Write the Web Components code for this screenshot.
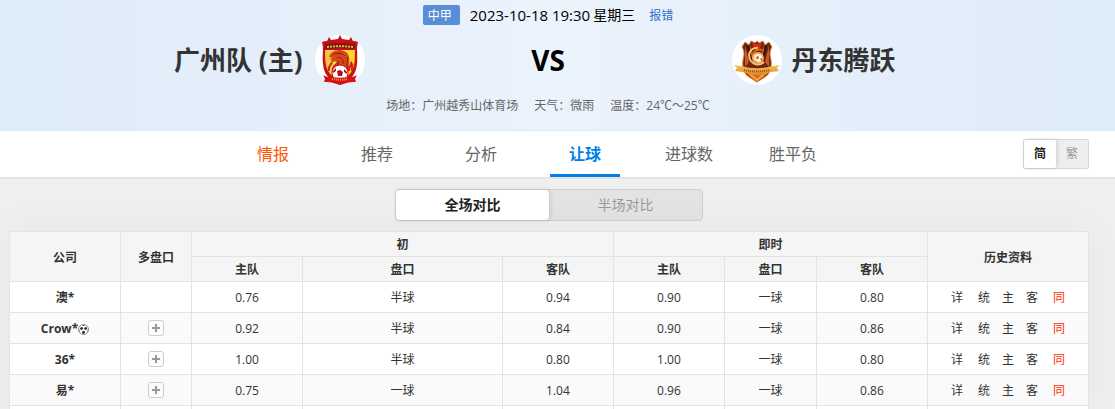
<!DOCTYPE html>
<html lang="zh-CN">
<head>
<meta charset="utf-8">
<title>让球</title>
<style>
  body {
    margin: 0;
    background: #efefef;
    color: #333;
    font: 12px/20px "Open Sans", "Noto Sans CJK SC", sans-serif;
    --gutter-left: 9px;
    --gutter-right: 26px;
  }
  main {
    padding: 10px var(--gutter-right) 0 var(--gutter-left);
  }
</style>
</head>
<body>

<match-header>
  <span slot="league">中甲</span>
  <time slot="time" datetime="2023-10-18T19:30">2023-10-18 19:30</time>
  <span slot="weekday">星期三</span>
  <team-name slot="home">广州队 (主)<home-crest slot="crest"></home-crest></team-name>
  <team-name slot="away" flip>丹东腾跃<away-crest slot="crest"></away-crest></team-name>
  <span slot="info">场地：广州越秀山体育场</span>
  <span slot="info">天气：微雨</span>
  <span slot="info">温度：24℃～25℃</span>
</match-header>

<match-nav></match-nav>

<main>
  <toggle-group class="period" options="全场对比,半场对比"></toggle-group>
  <odds-table></odds-table>
</main>

<script>
class MatchHeader extends HTMLElement {
  constructor() {
    super();
    this.attachShadow({ mode: 'open' });
  }

  connectedCallback() {
    this.shadowRoot.innerHTML = `
      <style>
        :host {
          display: block;
          padding: 0 28px 14px var(--gutter-left);
          border-bottom: 1px solid #d8eafc;
          background: linear-gradient(90deg, #deebf9, #ebf3fc 50%, #deebf9);
        }
        .top, .info {
          display: flex;
          justify-content: center;
          align-items: center;
        }
        .top {
          height: 30px;
          color: #000;
          font-size: 14px;
        }
        .league {
          padding: 2px 8px 0 5px;
          margin-right: 10px;
          border-radius: 2px;
          background: #588ed6;
          color: #fff;
          font-size: 12px;
          line-height: 18px;
        }
        ::slotted(time) {
          margin-right: 3px;
          font-size: 15px;
        }
        a {
          padding-top: 2px;
          margin-left: 14px;
          color: #2f6fcb;
          font-size: 12px;
          text-decoration: none;
        }
        .teams {
          display: grid;
          grid-template-columns: 1fr 367px 1fr;
          align-items: center;
          margin: 5px 0 11px;
        }
        .vs {
          color: #000;
          font-size: 28px;
          font-weight: bold;
          text-align: center;
        }
        .info {
          gap: 16px;
          color: #666;
        }
      </style>
      <div class="top">
        <span class="league"><slot name="league"></slot></span>
        <slot name="time"></slot>
        <slot name="weekday"></slot>
        <a href="#report">报错</a>
      </div>
      <div class="teams">
        <slot name="home"></slot>
        <span class="vs">VS</span>
        <slot name="away"></slot>
      </div>
      <div class="info"><slot name="info"></slot></div>
    `;
  }
}

class TeamName extends HTMLElement {
  constructor() {
    super();
    this.attachShadow({ mode: 'open' });
  }

  connectedCallback() {
    this.shadowRoot.innerHTML = `
      <style>
        :host {
          display: flex;
          justify-content: flex-end;
          align-items: center;
          gap: 12px;
          font-size: 26px;
          font-weight: bold;
        }
        :host([flip]) {
          flex-direction: row-reverse;
          gap: 10px;
        }
      </style>
      <span><slot></slot></span>
      <slot name="crest"></slot>
    `;
  }
}

const CREST_STYLE = `
  <style>
    :host { display: block; width: 50px; height: 50px; }
    svg { display: block; }
  </style>
`;

class HomeCrest extends HTMLElement {
  constructor() {
    super();
    this.attachShadow({ mode: 'open' });
  }

  connectedCallback() {
    this.shadowRoot.innerHTML = `${CREST_STYLE}
      <svg width="50" height="50" viewBox="0 0 50 50" aria-hidden="true">
        <defs>
          <linearGradient id="gold">
            <stop offset="0" stop-color="#f3bd45"/>
            <stop offset=".5" stop-color="#ffe94a"/>
            <stop offset="1" stop-color="#f8cf1c"/>
          </linearGradient>
        </defs>
        <circle cx="25" cy="25" r="25" fill="#fff"/>
        <path d="M7 7c2-1 3-1 5-1l2-4 2 3 7-1 2-4 2 4 7 1 2-3 2 4c2 0 3 0 5 1-2 7 0 14-1 22-1 10-5 15-17 21C13 44 9 39 8 29 7 21 9 14 7 7z" fill="#c9101a"/>
        <path d="M10 15h30c0 18-1 23-15 31C11 38 10 33 10 15z" fill="url(#gold)"/>
        <path d="M10 9c10-1 20-1 30 0v5c-10-1-20-1-30 0z" fill="#7d1410"/>
        <path d="M12 12c9-1 17-1 26 0" fill="none" stroke="#e5b43c" stroke-width="2" stroke-dasharray="2 1"/>
        <path d="M14 22c1-4 5-7 10-7s9 2 10 7c1 4-1 7 1 11l-4 5H17c-1-5 1-8 5-10l-2-2-5 3 2-4-3-1 4-1z" fill="#d4481b"/>
        <path d="M18 20c4-3 9-2 12 1M22 23c4-2 7 1 6 6M18 34c0-4 3-5 6-7M32 22c2 5-2 8 1 13M22 18l4 1M24 26l-3 7" fill="none" stroke="#971b12" stroke-width="1"/>
        <path d="M34 36c-1-4 3-5 2-9 3 4 0 6 1 9M14 36c-1-4 1-6 3-8" fill="none" stroke="#d71d19" stroke-width="2"/>
        <circle cx="25" cy="38" r="8" fill="#fff" stroke="#c9101a"/>
        <path d="M22 36l3-1 3 2-1 4h-4zM18 36l3-3v3l-3 2zM29 34l3 3v2l-3-2z" fill="#b01019"/>
        <path d="M8 40c3 2 6 2 9 2 5 1 11 1 16 0 3 0 6 0 9-2l-2 4 1 3c-4 0-7 0-9 1l-7 2-7-2c-2-1-5-1-9-1l1-3z" fill="#d3111b"/>
        <path d="M17 44c6 1 10 1 16 0" fill="none" stroke="#eaa72f" stroke-width="2" stroke-dasharray="1 1"/>
      </svg>
    `;
  }
}

class AwayCrest extends HTMLElement {
  constructor() {
    super();
    this.attachShadow({ mode: 'open' });
  }

  connectedCallback() {
    this.shadowRoot.innerHTML = `${CREST_STYLE}
      <svg width="50" height="50" viewBox="0 0 50 50" aria-hidden="true">
        <defs>
          <linearGradient id="ribbon" x2="0" y2="1">
            <stop offset="0" stop-color="#fac45c"/>
            <stop offset="1" stop-color="#df8828"/>
          </linearGradient>
        </defs>
        <circle cx="25" cy="25" r="25" fill="#fff"/>
        <path d="M13 7l4 3 2-4 4 2 2-2 2 2 4-2 2 4 4-3 3 5c-3 5-2 9-1 13 1 8-1 14-6 17l-8 5-8-5c-5-3-7-9-6-17 1-4 2-8-1-13z" fill="#6b2415" stroke="#d08a2c"/>
        <path d="M13 11l4 16-4 5zM18 10l3 9-3 9zM37 11l-4 16 4 5zM32 10l-3 9 3 9z" fill="#cf5a26"/>
        <path d="M16 11l4 17M34 11l-4 17" fill="none" stroke="#35100d" stroke-width="2"/>
        <path d="M20 8c3 1 7 1 10 0l-2 5h-6z" fill="#d9291c"/>
        <path d="M26 13c-8-1-11 7-7 13 3 4 9 5 13 1" fill="none" stroke="#f8c565" stroke-width="2"/>
        <path d="M30 15c-6-2-10 3-9 8" fill="none" stroke="#e3661f" stroke-width="2"/>
        <circle cx="26" cy="23" r="6" fill="#efb05d"/>
        <circle cx="26" cy="23" r="4" fill="#fff2de"/>
        <path d="M25 21l2 1-1 2h-2zM28 24l2-1v3zM22 25l2 1 1 2z" fill="#cb4923"/>
        <path d="M13 36h24c-2 4-6 7-12 11-6-4-10-7-12-11z" fill="#d9651f"/>
        <path d="M18 39l7 6 7-6" fill="none" stroke="#f2a638" stroke-width="2"/>
        <path d="M2 30l7 1c11 3 21 3 32 0l7-1-3 3 2 3-8 1c-9 4-19 4-28 0l-8-1 2-3z" fill="url(#ribbon)"/>
        <path d="M12 35c9 2 17 2 26 0" fill="none" stroke="#9c4d1c" stroke-width="2" stroke-dasharray="1 1"/>
      </svg>
    `;
  }
}

// Two buttons in one frame, the first option starts pressed
class ToggleGroup extends HTMLElement {
  constructor() {
    super();
    this.attachShadow({ mode: 'open' });
  }

  connectedCallback() {
    const options = this.getAttribute('options').split(',');
    this.shadowRoot.innerHTML = `
      <style>
        :host {
          display: flex;
          box-sizing: border-box;
          width: 66px;
          height: 30px;
          border: 1px solid #d8d8d8;
          border-radius: 2px;
          background: #eee;
          font-size: 12px;
        }
        :host(.period) {
          width: 308px;
          height: 32px;
          margin: 0 auto 10px;
          border-color: #d0d0d0;
          border-radius: 4px;
          background: #e3e3e3;
          font-size: 14px;
        }
        button {
          flex: 1;
          padding: 0;
          border: 0;
          border-radius: inherit;
          background: none;
          color: #999;
          font: inherit;
        }
        button[aria-pressed="true"] {
          background: #fff;
          box-shadow: 1px 0 4px rgba(0, 0, 0, .15);
          color: #222;
          font-weight: bold;
        }
      </style>
      ${options.map((text, i) => `<button type="button" aria-pressed="${i === 0}">${text}</button>`).join('')}
    `;
    const buttons = this.shadowRoot.querySelectorAll('button');
    buttons.forEach(button => button.addEventListener('click', () => {
      buttons.forEach(b => b.setAttribute('aria-pressed', b === button));
    }));
  }
}

class MatchNav extends HTMLElement {
  constructor() {
    super();
    this.attachShadow({ mode: 'open' });
  }

  connectedCallback() {
    this.shadowRoot.innerHTML = `
      <style>
        :host {
          display: flex;
          align-items: center;
          padding: 0 var(--gutter-right) 0 var(--gutter-left);
          border-bottom: 2px solid #e4e4e4;
          background: #fff;
        }
        nav {
          flex: 1;
          display: flex;
          justify-content: center;
          padding-left: 34px;
        }
        a {
          box-sizing: border-box;
          width: 70px;
          height: 46px;
          margin: 0 17px;
          border-bottom: 3px solid transparent;
          color: #666;
          font-size: 16px;
          line-height: 46px;
          text-align: center;
          text-decoration: none;
        }
        .hot {
          color: #ff5400;
        }
        [aria-current] {
          border-color: #0080e8;
          color: #0080e8;
          font-weight: bold;
        }
      </style>
      <nav>
        <a class="hot" href="#info">情报</a>
        <a href="#tips">推荐</a>
        <a href="#analysis">分析</a>
        <a href="#handicap" aria-current="page">让球</a>
        <a href="#goals">进球数</a>
        <a href="#result">胜平负</a>
      </nav>
      <toggle-group options="简,繁"></toggle-group>
    `;
  }
}

class OddsTable extends HTMLElement {
  constructor() {
    super();
    this.attachShadow({ mode: 'open' });
    this.rows = [
      { name: '澳*', odds: ['0.76', '半球', '0.94', '0.90', '一球', '0.80'] },
      { name: 'Crow*', live: true, multi: true, odds: ['0.92', '半球', '0.84', '0.90', '一球', '0.86'] },
      { name: '36*', multi: true, odds: ['1.00', '半球', '0.80', '1.00', '一球', '0.80'] },
      { name: '易*', multi: true, odds: ['0.75', '一球', '1.04', '0.96', '一球', '0.86'] }
    ];
  }

  ball() {
    return `<svg class="ball" width="11" height="11" viewBox="0 0 11 11" aria-hidden="true">
      <circle cx="5.5" cy="5.5" r="5" fill="#fff" stroke="#7f9296"/>
      <path d="M2.500 3.500l2-.5.5 2-1.500 1-1.500-1zM7 3l2 .5V5L7.500 6 6 5zM4.500 7h2l.5 2-1.500 1L4 9zM.5 5l1 1v2zM10.500 5l-1 1v2zM4 1h3L5.500 2z" fill="#222"/>
    </svg>`;
  }

  row({ name, live, multi, odds }) {
    return `<tr>
      <th scope="row">${name}${live ? this.ball() : ''}</th>
      <td class="expand">${multi ? '<button type="button" aria-label="展开"></button>' : ''}</td>
      ${odds.map(value => `<td>${value}</td>`).join('')}
      <td><div class="links">
        <a href="#detail">详</a><a href="#stats">统</a><a href="#home">主</a><a href="#away">客</a><a href="#same">同</a>
      </div></td>
    </tr>`;
  }

  connectedCallback() {
    this.shadowRoot.innerHTML = `
      <style>
        :host {
          display: block;
          box-shadow: 0 0 40px rgba(0, 0, 0, .04);
        }
        table {
          width: 100%;
          border-collapse: collapse;
          table-layout: fixed;
          background: #fff;
          text-align: center;
        }
        .odd { width: 111px; }
        .multi { width: 71px; }
        .now { width: 92px; }
        .history { width: 161px; }
        th, td {
          box-sizing: border-box;
          height: 31px;
          padding: 2px 0 0;
          border: 1px solid #e3e3e3;
        }
        thead th {
          height: 25px;
          background: #f5f5f5;
        }
        tbody tr:nth-child(even) {
          background: #fafafa;
        }
        .expand {
          padding: 0;
        }
        tfoot td {
          height: 4px;
          border-bottom: 0;
        }
        .ball {
          vertical-align: -2px;
        }
        button {
          display: block;
          width: 16px;
          height: 16px;
          margin: 0 auto;
          padding: 0;
          border: 1px solid #ccc;
          border-radius: 3px;
          background:
            linear-gradient(#999, #999) center / 8px 2px no-repeat,
            linear-gradient(#999, #999) center / 2px 8px no-repeat,
            #fcfcfc;
        }
        .links {
          display: flex;
          justify-content: center;
          gap: 12px;
        }
        a {
          color: inherit;
          text-decoration: none;
        }
        a:first-child {
          margin-right: 3px;
        }
        a:last-child {
          margin-left: 3px;
          color: #ff3300;
        }
      </style>
      <table>
        <colgroup>
          <col class="odd"><col class="multi">
          <col class="odd"><col><col class="odd">
          <col class="odd"><col class="now"><col class="odd">
          <col class="history">
        </colgroup>
        <thead>
          <tr>
            <th rowspan="2">公司</th>
            <th rowspan="2">多盘口</th>
            <th colspan="3">初</th>
            <th colspan="3">即时</th>
            <th rowspan="2">历史资料</th>
          </tr>
          <tr>
            <th>主队</th><th>盘口</th><th>客队</th>
            <th>主队</th><th>盘口</th><th>客队</th>
          </tr>
        </thead>
        <tbody>${this.rows.map(row => this.row(row)).join('')}</tbody>
        <tfoot><tr>${'<td></td>'.repeat(9)}</tr></tfoot>
      </table>
    `;
  }
}

customElements.define('match-header', MatchHeader);
customElements.define('team-name', TeamName);
customElements.define('home-crest', HomeCrest);
customElements.define('away-crest', AwayCrest);
customElements.define('toggle-group', ToggleGroup);
customElements.define('match-nav', MatchNav);
customElements.define('odds-table', OddsTable);
</script>
</body>
</html>
